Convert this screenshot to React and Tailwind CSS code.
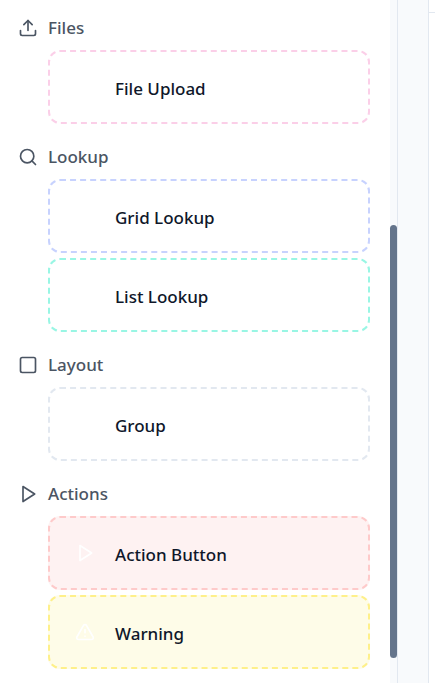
import React from "react";

const shapes = {
  upload: (
    <>
      <path d="M21 15v4a2 2 0 0 1-2 2H5a2 2 0 0 1-2-2v-4" />
      <polyline points="17 8 12 3 7 8" />
      <line x1="12" x2="12" y1="3" y2="15" />
    </>
  ),
  search: (
    <>
      <circle cx="11" cy="11" r="8" />
      <path d="m21 21-4.3-4.3" />
    </>
  ),
  square: <rect width="18" height="18" x="3" y="3" rx="2" />,
  play: <polygon points="6 3 20 12 6 21 6 3" />,
  warning: (
    <>
      <path d="m21.73 18-8-14a2 2 0 0 0-3.48 0l-8 14A2 2 0 0 0 4 21h16a2 2 0 0 0 1.73-3Z" />
      <path d="M12 9v4" />
      <path d="M12 17h.01" />
    </>
  ),
};

function Icon({ name, className = "" }) {
  return (
    <svg
      viewBox="0 0 24 24"
      fill="none"
      stroke="currentColor"
      strokeWidth="2"
      strokeLinecap="round"
      strokeLinejoin="round"
      aria-hidden="true"
      className={`size-5 shrink-0 ${className}`}
    >
      {shapes[name]}
    </svg>
  );
}

const groups = [
  { title: "Files", icon: "upload", items: [{ label: "File Upload", icon: "upload", tone: "border-[#fbcfe8] bg-white" }] },
  {
    title: "Lookup",
    icon: "search",
    items: [
      { label: "Grid Lookup", icon: "search", tone: "border-[#c7d2fe] bg-white" },
      { label: "List Lookup", icon: "search", tone: "border-[#99f6e4] bg-white" },
    ],
  },
  { title: "Layout", icon: "square", items: [{ label: "Group", icon: "square", tone: "border-[#e2e8f0] bg-white" }] },
  {
    title: "Actions",
    icon: "play",
    items: [
      { label: "Action Button", icon: "play", tone: "border-[#fecaca] bg-[#fef2f2]" },
      { label: "Warning", icon: "warning", tone: "border-[#fef08a] bg-[#fefce8]" },
    ],
  },
];

function Card({ label, icon, tone }) {
  return (
    <button type="button" className={`flex h-[74px] w-full items-center rounded-xl border-2 border-dashed pl-[25px] text-left ${tone}`}>
      <Icon name={icon} className="text-white" />
      <span className="mt-1 ml-5 text-[17px] leading-6 font-medium text-[#0f172a]">{label}</span>
    </button>
  );
}

export default function App() {
  return (
    <div className="flex h-screen overflow-hidden bg-[#f8fafc] font-['Noto_Sans',sans-serif]">
      <aside className="flex min-w-0 grow border-r border-[#e2e8f0] bg-white">
        <div className="flex min-w-0 grow flex-col gap-[21px] pt-4 pr-5 pl-[18px]">
          {groups.map((group) => (
            <section key={group.title}>
              <h3 className="flex h-6 items-center gap-[10px] text-[17px] leading-6 font-medium text-[#4b5563]">
                <Icon name={group.icon} />
                {group.title}
              </h3>
              <div className="mt-[10px] ml-[30px] flex flex-col gap-[5px]">
                {group.items.map((item) => (
                  <Card key={item.label} {...item} />
                ))}
              </div>
            </section>
          ))}
        </div>
        <div className="flex w-[7px] shrink-0 flex-col bg-[#f8fafc] pt-[225px]">
          <div className="h-[433px] rounded-full bg-[#64748b]" />
        </div>
      </aside>
      <div className="w-[30px] shrink-0" />
      <main className="w-[7px] shrink-0 border-l border-[#e2e8f0] bg-white">
        <div className="h-[13px] border-b border-[#e2e8f0]" />
      </main>
    </div>
  );
}
